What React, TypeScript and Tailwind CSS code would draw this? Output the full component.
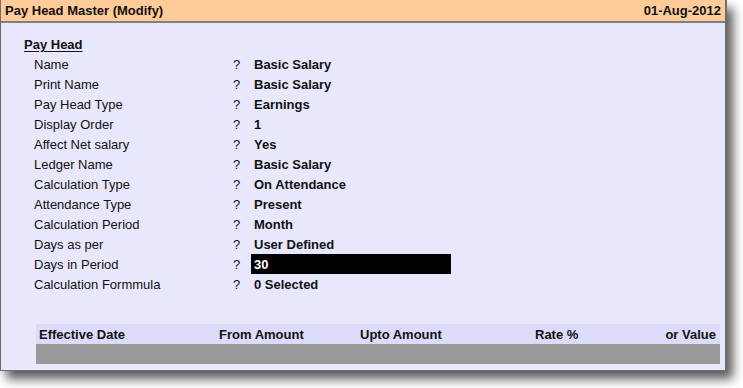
import React from "react";

const rows: [string, string][] = [
  ["Name", "Basic Salary"],
  ["Print Name", "Basic Salary"],
  ["Pay Head Type", "Earnings"],
  ["Display Order", "1"],
  ["Affect Net salary", "Yes"],
  ["Ledger Name", "Basic Salary"],
  ["Calculation Type", "On Attendance"],
  ["Attendance Type", "Present"],
  ["Calculation Period", "Month"],
  ["Days as per", "User Defined"],
  ["Days in Period", "30"],
  ["Calculation Formmula", "0 Selected"],
];

export default function App() {
  return (
    <div className="w-[743px] h-[388px] bg-white text-[13px] text-[#111111] font-['Liberation_Sans',Arial,sans-serif]">
      <div className="w-[727px] h-[371px] flex flex-col bg-[#e8e8fc] border-l border-r-2 border-b border-[#6e6e6e] shadow-[6px_8px_10px_rgba(0,0,0,0.65)]">
        <div className="h-[21px] bg-[#ffcc99] flex items-center justify-between pl-[4px] pr-[4px] font-bold leading-none">
          <span>Pay Head Master (Modify)</span>
          <span>01-Aug-2012</span>
        </div>
        <div className="h-[2px] bg-[#808080]" />
        <div className="pt-[12px] pl-[23px]">
          <div className="h-[19px] leading-[19px] font-bold underline underline-offset-2">Pay Head</div>
        </div>
        <div className="flex flex-col">
          {rows.map(([label, value]) => (
            <div key={label} className="flex h-[20px] items-center leading-none">
              <span className="w-[232px] pl-[33px]">{label}</span>
              <span className="w-[18px]">?</span>
              {label === "Days in Period" ? (
                <span className="w-[200px] h-[20px] bg-black text-white font-bold pl-[3px] flex items-center">{value}</span>
              ) : (
                <span className="font-bold pl-[3px]">{value}</span>
              )}
            </div>
          ))}
        </div>
        <div className="mt-[30px] ml-[35px] w-[684px]">
          <div className="h-[20px] bg-[#dcdcfa] flex items-center font-bold leading-none">
            <span className="w-[183px] pl-[3px]">Effective Date</span>
            <span className="w-[141px]">From Amount</span>
            <span className="w-[175px]">Upto Amount</span>
            <span className="w-[100px]">Rate %</span>
            <span className="flex-1 text-right pr-[4px]">or Value</span>
          </div>
          <div className="h-[20px] bg-[#999999]" />
        </div>
      </div>
    </div>
  );
}
